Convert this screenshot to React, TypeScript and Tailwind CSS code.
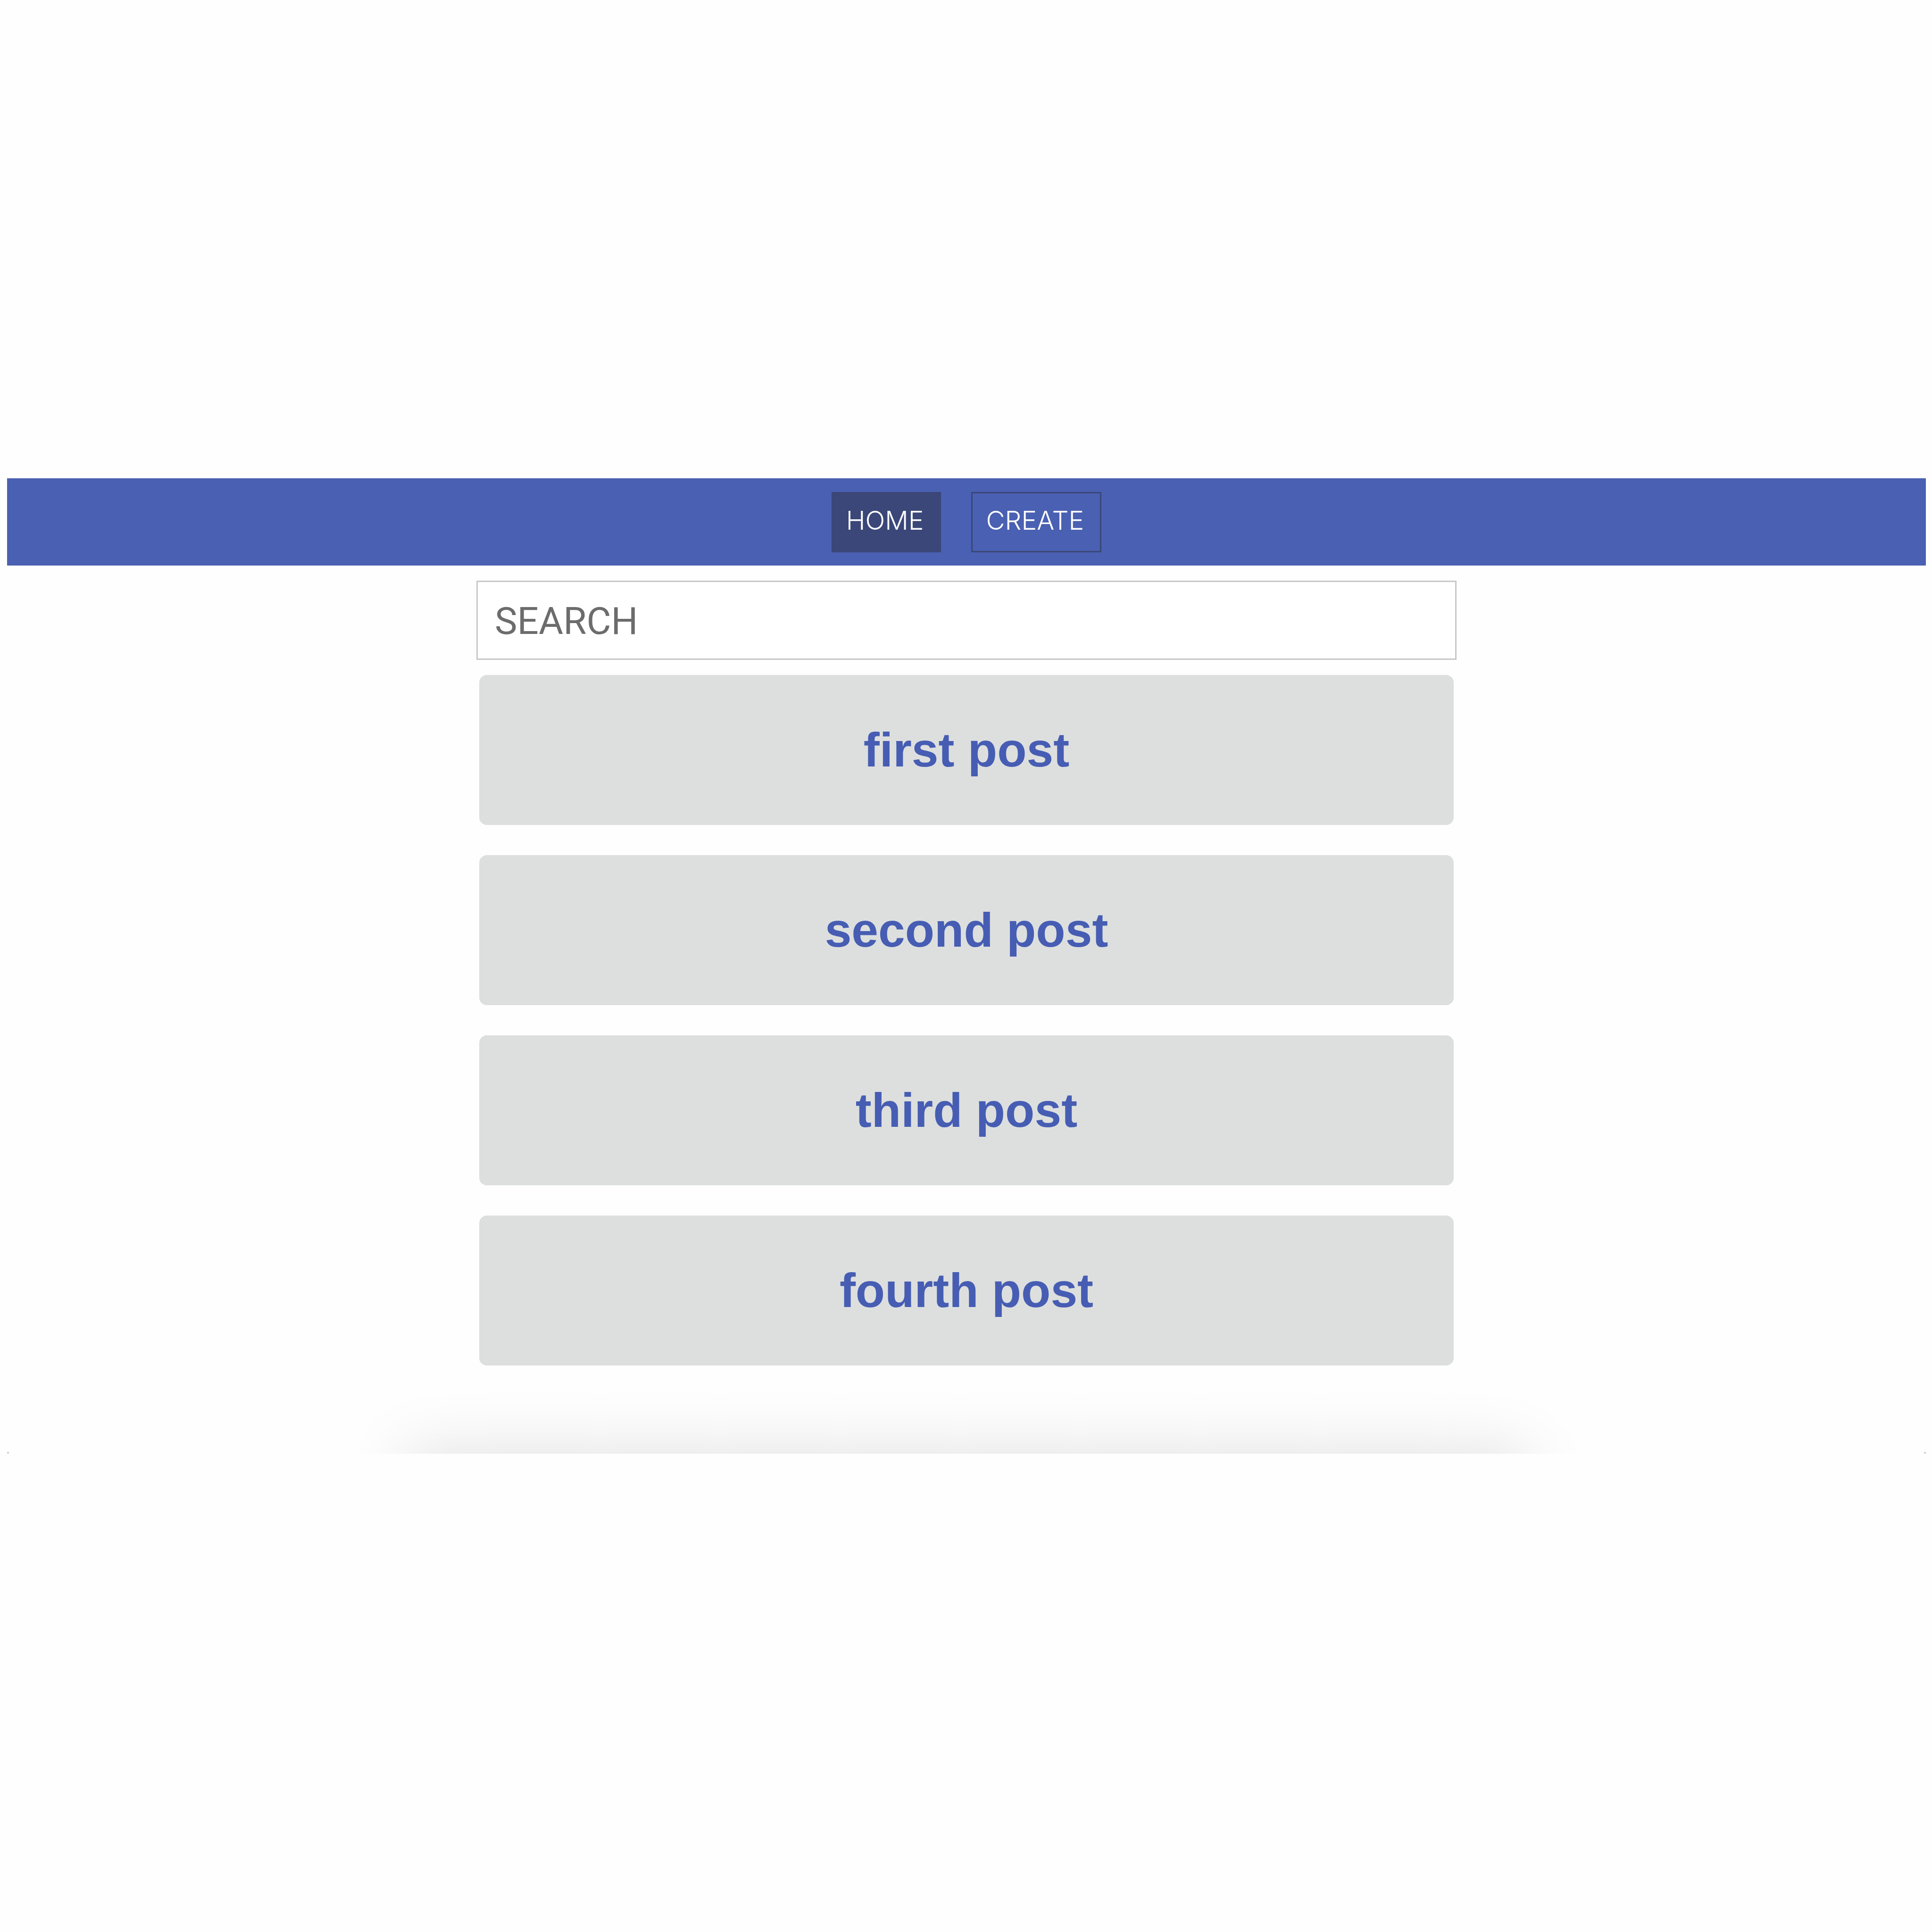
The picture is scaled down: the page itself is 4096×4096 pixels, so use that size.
const posts = ["first post", "second post", "third post", "fourth post"];

function NavButton({ label, active = false }: { label: string; active?: boolean }) {
  return (
    <button
      type="button"
      className={`flex h-32 items-center border-3 border-[#3a4778] pr-[34px] pb-1.5 pl-7 text-[55px] leading-none font-light text-white ${
        active ? "bg-[#3a4778]" : "bg-transparent"
      }`}
    >
      {label}
    </button>
  );
}

export default function App() {
  return (
    <div className="flex min-h-screen flex-col justify-center bg-[#fefefe] pr-[13px] pl-[15px] font-['Inter',sans-serif]">
      <header className="bg-[#4a60b2]">
        <nav className="flex h-[185px] items-center justify-center gap-16">
          <NavButton label="HOME" active />
          <NavButton label="CREATE" />
        </nav>
      </header>
      <main className="flex flex-col items-center pt-8">
        <input
          type="text"
          aria-label="Search posts"
          placeholder="SEARCH"
          className="h-[168px] w-full max-w-[2078px] border-3 border-[#c8c8c8] bg-white px-9 pt-1 font-['Roboto',sans-serif] text-[80px] text-[#333] outline-none placeholder:text-[#6c6c6c] placeholder:opacity-100"
        />
        <ul className="mt-8 flex w-full max-w-[2066px] flex-col gap-16">
          {posts.map((post) => (
            <li key={post} className="flex h-[318px] items-center justify-center rounded-2xl bg-[#dddfde]">
              <h2 className="font-['Liberation_Sans',Arial,sans-serif] text-[102px] leading-none font-bold text-[#465db3]">
                {post}
              </h2>
            </li>
          ))}
        </ul>
      </main>
      <div className="flex h-[187px] items-end justify-between overflow-hidden">
        <span className="size-1 bg-[#d4d4d4]" />
        <div className="h-0 w-full max-w-[2240px] shadow-[0_70px_140px_70px_rgba(0,0,0,0.13)]" />
        <span className="size-1 bg-[#d4d4d4]" />
      </div>
    </div>
  );
}
